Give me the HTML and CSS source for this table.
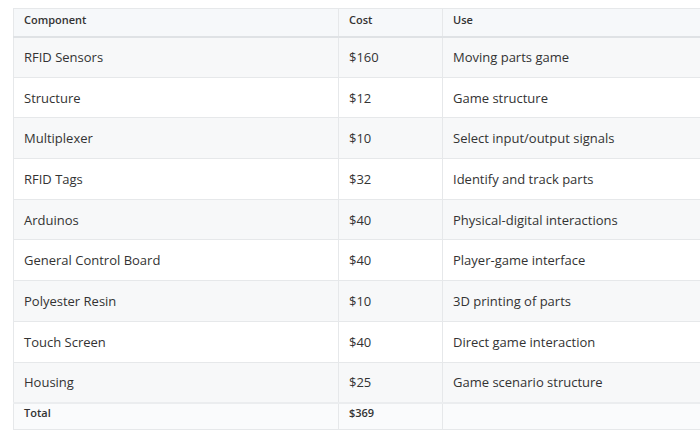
FILE: index.html
```html
<!DOCTYPE html>
<html lang="en">
<head>
    <meta charset="utf-8">
    <title>Components</title>
    <link rel="stylesheet" href="styles.css">
</head>
<body>
<table class="parts">
    <thead>
    <tr>
        <th class="col-name">Component</th>
        <th class="col-cost">Cost</th>
        <th class="col-use">Use</th>
    </tr>
    </thead>
    <tbody>
    <tr><td>RFID Sensors</td><td>$160</td><td>Moving parts game</td></tr>
    <tr><td>Structure</td><td>$12</td><td>Game structure</td></tr>
    <tr><td>Multiplexer</td><td>$10</td><td>Select input/output signals</td></tr>
    <tr><td>RFID Tags</td><td>$32</td><td>Identify and track parts</td></tr>
    <tr><td>Arduinos</td><td>$40</td><td>Physical-digital interactions</td></tr>
    <tr><td>General Control Board</td><td>$40</td><td>Player-game interface</td></tr>
    <tr><td>Polyester Resin</td><td>$10</td><td>3D printing of parts</td></tr>
    <tr><td>Touch Screen</td><td>$40</td><td>Direct game interaction</td></tr>
    <tr><td>Housing</td><td>$25</td><td>Game scenario structure</td></tr>
    </tbody>
    <tfoot>
    <tr><td>Total</td><td>$369</td><td></td></tr>
    </tfoot>
</table>
</body>
</html>
```

FILE: styles.css
```css
* {
    margin: 0;
    padding: 0;
    box-sizing: border-box;
}

body {
    background-color: #fff;
    font-family: "Open Sans", "Liberation Sans", sans-serif;
    color: #333;
    overflow: hidden;
}

.parts {
    margin: 8px 0 0 13px;
    width: 687px;
    border-collapse: collapse;
    table-layout: fixed;
}

.parts th,
.parts td {
    border: 1px solid #e6e8ea;
    padding: 0 10px;
    text-align: left;
}

.parts th:last-child,
.parts td:last-child {
    border-right: none;
}

.parts th {
    height: 28px;
    padding-top: 3px;
    vertical-align: top;
    font-size: 11px;
    font-weight: 600;
    background-color: #f6f8fa;
    border-bottom: 2px solid #dfe2e5;
}

.parts .col-name {
    width: 325px;
}

.parts .col-cost {
    width: 104px;
}

.parts tbody td {
    height: 40.7px;
    font-size: 13px;
}

.parts tbody tr:nth-child(odd) td {
    background-color: #f7f8f9;
}

.parts tfoot td {
    height: 27px;
    padding-top: 1px;
    vertical-align: top;
    font-size: 11px;
    font-weight: 600;
    background-color: #fafbfc;
    border-top: 2px solid #ebedef;
}
```
